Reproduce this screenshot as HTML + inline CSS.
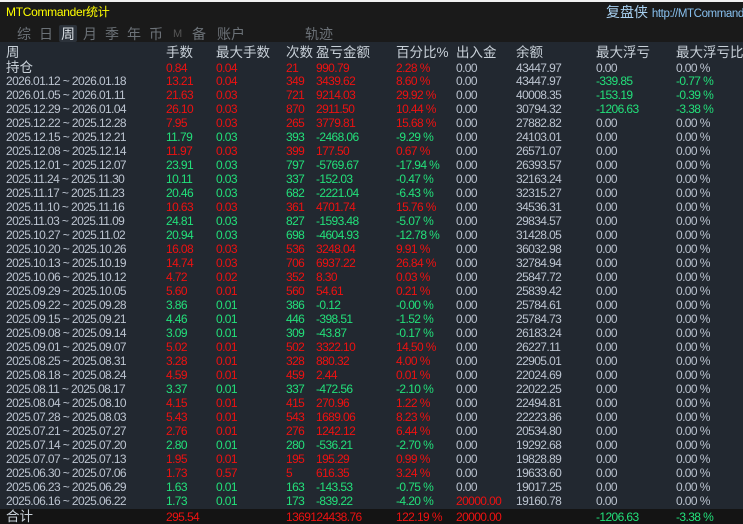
<!DOCTYPE html>
<html><head><meta charset="utf-8"><style>
*{margin:0;padding:0;box-sizing:border-box}
body{width:743px;height:524px;overflow:hidden;background:#222830;font-family:"Liberation Sans","Noto Sans CJK SC",sans-serif;position:relative}
#top{position:absolute;left:0;top:0;width:743px;height:42px;background:#1a1a1a;border-top:2px solid #f0f0f0}
.t{position:absolute;white-space:nowrap}
.tab{position:absolute;top:24px;font-size:14px;color:#6c7278;line-height:17px}
.r{position:absolute;left:0;width:743px;height:14px;line-height:14px;font-size:12px;letter-spacing:-0.6px;color:#bcc4d0;white-space:nowrap}
.r span{position:absolute;top:0}
.a{left:6px}.b{left:166px}.c{left:216px}.d{left:286px}.e{left:316px}.f{left:396px}.g{left:456px}.h{left:516px}.i{left:596px}.j{left:676px}
.R .b,.R .c,.R .d,.R .e,.R .f{color:#ee1111}
.G .b,.G .c,.G .d,.G .e,.G .f{color:#22e07a}
.red{color:#ee1111!important}.grn{color:#22e07a!important}
.hd{font-size:13.5px;letter-spacing:0;color:#c8d0d8;height:16px;line-height:16px}
.cn{font-size:13.5px;letter-spacing:0;color:#c8d0d8}
</style></head><body>
<div id="top">
<div class="t" style="left:6px;top:3px;font-size:12px;color:#ffff00;line-height:14px;letter-spacing:-0.3px">MTCommander统计</div>
<div class="t" style="left:606px;top:2px;font-size:14px;color:#a8d0f0;line-height:17px">复盘侠 <span style="font-size:11.5px;letter-spacing:-0.4px;color:#88c0ee">http://MTCommander</span></div>
<div style="position:absolute;left:59px;top:23px;width:18px;height:17px;background:#2c323a;border-radius:2px"></div>
<div class="tab" style="left:17px">综</div><div class="tab" style="left:39px">日</div><div class="tab" style="left:61px;color:#d8dde2">周</div><div class="tab" style="left:83px">月</div><div class="tab" style="left:105px">季</div><div class="tab" style="left:127px">年</div><div class="tab" style="left:149px">币</div><div class="tab" style="left:173px;font-size:11px;color:#555">M</div><div class="tab" style="left:192px">备</div><div class="tab" style="left:217px">账户</div><div class="tab" style="left:305px">轨迹</div>
</div>
<div class="r hd" style="top:45px"><span class="a">周</span><span class="b">手数</span><span class="c">最大手数</span><span class="d">次数</span><span class="e">盈亏金额</span><span class="f">百分比%</span><span class="g">出入金</span><span class="h">余额</span><span class="i">最大浮亏</span><span class="j">最大浮亏比例</span></div>
<div class="r R" style="top:61px"><span class="a cn">持仓</span><span class="b">0.84</span><span class="c">0.04</span><span class="d">21</span><span class="e">990.79</span><span class="f">2.28 %</span><span class="g">0.00</span><span class="h">43447.97</span><span class="i">0.00</span><span class="j">0.00 %</span></div>
<div class="r R" style="top:74px"><span class="a">2026.01.12 ~ 2026.01.18</span><span class="b">13.21</span><span class="c">0.04</span><span class="d">349</span><span class="e">3439.62</span><span class="f">8.60 %</span><span class="g">0.00</span><span class="h">43447.97</span><span class="i grn">-339.85</span><span class="j grn">-0.77 %</span></div>
<div class="r R" style="top:88px"><span class="a">2026.01.05 ~ 2026.01.11</span><span class="b">21.63</span><span class="c">0.03</span><span class="d">721</span><span class="e">9214.03</span><span class="f">29.92 %</span><span class="g">0.00</span><span class="h">40008.35</span><span class="i grn">-153.19</span><span class="j grn">-0.39 %</span></div>
<div class="r R" style="top:102px"><span class="a">2025.12.29 ~ 2026.01.04</span><span class="b">26.10</span><span class="c">0.03</span><span class="d">870</span><span class="e">2911.50</span><span class="f">10.44 %</span><span class="g">0.00</span><span class="h">30794.32</span><span class="i grn">-1206.63</span><span class="j grn">-3.38 %</span></div>
<div class="r R" style="top:116px"><span class="a">2025.12.22 ~ 2025.12.28</span><span class="b">7.95</span><span class="c">0.03</span><span class="d">265</span><span class="e">3779.81</span><span class="f">15.68 %</span><span class="g">0.00</span><span class="h">27882.82</span><span class="i">0.00</span><span class="j">0.00 %</span></div>
<div class="r G" style="top:130px"><span class="a">2025.12.15 ~ 2025.12.21</span><span class="b">11.79</span><span class="c">0.03</span><span class="d">393</span><span class="e">-2468.06</span><span class="f">-9.29 %</span><span class="g">0.00</span><span class="h">24103.01</span><span class="i">0.00</span><span class="j">0.00 %</span></div>
<div class="r R" style="top:144px"><span class="a">2025.12.08 ~ 2025.12.14</span><span class="b">11.97</span><span class="c">0.03</span><span class="d">399</span><span class="e">177.50</span><span class="f">0.67 %</span><span class="g">0.00</span><span class="h">26571.07</span><span class="i">0.00</span><span class="j">0.00 %</span></div>
<div class="r G" style="top:158px"><span class="a">2025.12.01 ~ 2025.12.07</span><span class="b">23.91</span><span class="c">0.03</span><span class="d">797</span><span class="e">-5769.67</span><span class="f">-17.94 %</span><span class="g">0.00</span><span class="h">26393.57</span><span class="i">0.00</span><span class="j">0.00 %</span></div>
<div class="r G" style="top:172px"><span class="a">2025.11.24 ~ 2025.11.30</span><span class="b">10.11</span><span class="c">0.03</span><span class="d">337</span><span class="e">-152.03</span><span class="f">-0.47 %</span><span class="g">0.00</span><span class="h">32163.24</span><span class="i">0.00</span><span class="j">0.00 %</span></div>
<div class="r G" style="top:186px"><span class="a">2025.11.17 ~ 2025.11.23</span><span class="b">20.46</span><span class="c">0.03</span><span class="d">682</span><span class="e">-2221.04</span><span class="f">-6.43 %</span><span class="g">0.00</span><span class="h">32315.27</span><span class="i">0.00</span><span class="j">0.00 %</span></div>
<div class="r R" style="top:200px"><span class="a">2025.11.10 ~ 2025.11.16</span><span class="b">10.63</span><span class="c">0.03</span><span class="d">361</span><span class="e">4701.74</span><span class="f">15.76 %</span><span class="g">0.00</span><span class="h">34536.31</span><span class="i">0.00</span><span class="j">0.00 %</span></div>
<div class="r G" style="top:214px"><span class="a">2025.11.03 ~ 2025.11.09</span><span class="b">24.81</span><span class="c">0.03</span><span class="d">827</span><span class="e">-1593.48</span><span class="f">-5.07 %</span><span class="g">0.00</span><span class="h">29834.57</span><span class="i">0.00</span><span class="j">0.00 %</span></div>
<div class="r G" style="top:228px"><span class="a">2025.10.27 ~ 2025.11.02</span><span class="b">20.94</span><span class="c">0.03</span><span class="d">698</span><span class="e">-4604.93</span><span class="f">-12.78 %</span><span class="g">0.00</span><span class="h">31428.05</span><span class="i">0.00</span><span class="j">0.00 %</span></div>
<div class="r R" style="top:242px"><span class="a">2025.10.20 ~ 2025.10.26</span><span class="b">16.08</span><span class="c">0.03</span><span class="d">536</span><span class="e">3248.04</span><span class="f">9.91 %</span><span class="g">0.00</span><span class="h">36032.98</span><span class="i">0.00</span><span class="j">0.00 %</span></div>
<div class="r R" style="top:256px"><span class="a">2025.10.13 ~ 2025.10.19</span><span class="b">14.74</span><span class="c">0.03</span><span class="d">706</span><span class="e">6937.22</span><span class="f">26.84 %</span><span class="g">0.00</span><span class="h">32784.94</span><span class="i">0.00</span><span class="j">0.00 %</span></div>
<div class="r R" style="top:270px"><span class="a">2025.10.06 ~ 2025.10.12</span><span class="b">4.72</span><span class="c">0.02</span><span class="d">352</span><span class="e">8.30</span><span class="f">0.03 %</span><span class="g">0.00</span><span class="h">25847.72</span><span class="i">0.00</span><span class="j">0.00 %</span></div>
<div class="r R" style="top:284px"><span class="a">2025.09.29 ~ 2025.10.05</span><span class="b">5.60</span><span class="c">0.01</span><span class="d">560</span><span class="e">54.61</span><span class="f">0.21 %</span><span class="g">0.00</span><span class="h">25839.42</span><span class="i">0.00</span><span class="j">0.00 %</span></div>
<div class="r G" style="top:298px"><span class="a">2025.09.22 ~ 2025.09.28</span><span class="b">3.86</span><span class="c">0.01</span><span class="d">386</span><span class="e">-0.12</span><span class="f">-0.00 %</span><span class="g">0.00</span><span class="h">25784.61</span><span class="i">0.00</span><span class="j">0.00 %</span></div>
<div class="r G" style="top:312px"><span class="a">2025.09.15 ~ 2025.09.21</span><span class="b">4.46</span><span class="c">0.01</span><span class="d">446</span><span class="e">-398.51</span><span class="f">-1.52 %</span><span class="g">0.00</span><span class="h">25784.73</span><span class="i">0.00</span><span class="j">0.00 %</span></div>
<div class="r G" style="top:326px"><span class="a">2025.09.08 ~ 2025.09.14</span><span class="b">3.09</span><span class="c">0.01</span><span class="d">309</span><span class="e">-43.87</span><span class="f">-0.17 %</span><span class="g">0.00</span><span class="h">26183.24</span><span class="i">0.00</span><span class="j">0.00 %</span></div>
<div class="r R" style="top:340px"><span class="a">2025.09.01 ~ 2025.09.07</span><span class="b">5.02</span><span class="c">0.01</span><span class="d">502</span><span class="e">3322.10</span><span class="f">14.50 %</span><span class="g">0.00</span><span class="h">26227.11</span><span class="i">0.00</span><span class="j">0.00 %</span></div>
<div class="r R" style="top:354px"><span class="a">2025.08.25 ~ 2025.08.31</span><span class="b">3.28</span><span class="c">0.01</span><span class="d">328</span><span class="e">880.32</span><span class="f">4.00 %</span><span class="g">0.00</span><span class="h">22905.01</span><span class="i">0.00</span><span class="j">0.00 %</span></div>
<div class="r R" style="top:368px"><span class="a">2025.08.18 ~ 2025.08.24</span><span class="b">4.59</span><span class="c">0.01</span><span class="d">459</span><span class="e">2.44</span><span class="f">0.01 %</span><span class="g">0.00</span><span class="h">22024.69</span><span class="i">0.00</span><span class="j">0.00 %</span></div>
<div class="r G" style="top:382px"><span class="a">2025.08.11 ~ 2025.08.17</span><span class="b">3.37</span><span class="c">0.01</span><span class="d">337</span><span class="e">-472.56</span><span class="f">-2.10 %</span><span class="g">0.00</span><span class="h">22022.25</span><span class="i">0.00</span><span class="j">0.00 %</span></div>
<div class="r R" style="top:396px"><span class="a">2025.08.04 ~ 2025.08.10</span><span class="b">4.15</span><span class="c">0.01</span><span class="d">415</span><span class="e">270.96</span><span class="f">1.22 %</span><span class="g">0.00</span><span class="h">22494.81</span><span class="i">0.00</span><span class="j">0.00 %</span></div>
<div class="r R" style="top:410px"><span class="a">2025.07.28 ~ 2025.08.03</span><span class="b">5.43</span><span class="c">0.01</span><span class="d">543</span><span class="e">1689.06</span><span class="f">8.23 %</span><span class="g">0.00</span><span class="h">22223.86</span><span class="i">0.00</span><span class="j">0.00 %</span></div>
<div class="r R" style="top:424px"><span class="a">2025.07.21 ~ 2025.07.27</span><span class="b">2.76</span><span class="c">0.01</span><span class="d">276</span><span class="e">1242.12</span><span class="f">6.44 %</span><span class="g">0.00</span><span class="h">20534.80</span><span class="i">0.00</span><span class="j">0.00 %</span></div>
<div class="r G" style="top:438px"><span class="a">2025.07.14 ~ 2025.07.20</span><span class="b">2.80</span><span class="c">0.01</span><span class="d">280</span><span class="e">-536.21</span><span class="f">-2.70 %</span><span class="g">0.00</span><span class="h">19292.68</span><span class="i">0.00</span><span class="j">0.00 %</span></div>
<div class="r R" style="top:452px"><span class="a">2025.07.07 ~ 2025.07.13</span><span class="b">1.95</span><span class="c">0.01</span><span class="d">195</span><span class="e">195.29</span><span class="f">0.99 %</span><span class="g">0.00</span><span class="h">19828.89</span><span class="i">0.00</span><span class="j">0.00 %</span></div>
<div class="r R" style="top:466px"><span class="a">2025.06.30 ~ 2025.07.06</span><span class="b">1.73</span><span class="c">0.57</span><span class="d">5</span><span class="e">616.35</span><span class="f">3.24 %</span><span class="g">0.00</span><span class="h">19633.60</span><span class="i">0.00</span><span class="j">0.00 %</span></div>
<div class="r G" style="top:480px"><span class="a">2025.06.23 ~ 2025.06.29</span><span class="b">1.63</span><span class="c">0.01</span><span class="d">163</span><span class="e">-143.53</span><span class="f">-0.75 %</span><span class="g">0.00</span><span class="h">19017.25</span><span class="i">0.00</span><span class="j">0.00 %</span></div>
<div class="r G" style="top:494px"><span class="a">2025.06.16 ~ 2025.06.22</span><span class="b">1.73</span><span class="c">0.01</span><span class="d">173</span><span class="e">-839.22</span><span class="f">-4.20 %</span><span class="g red">20000.00</span><span class="h">19160.78</span><span class="i">0.00</span><span class="j">0.00 %</span></div>
<div style="position:absolute;left:0;top:509px;width:743px;height:15px;background:#141414"></div>
<div class="r" style="top:510px"><span class="a cn">合计</span><span class="b red">295.54</span><span class="d red">1369124438.76</span><span class="f red">122.19 %</span><span class="g red">20000.00</span><span class="i grn">-1206.63</span><span class="j grn">-3.38 %</span></div>
</body></html>
